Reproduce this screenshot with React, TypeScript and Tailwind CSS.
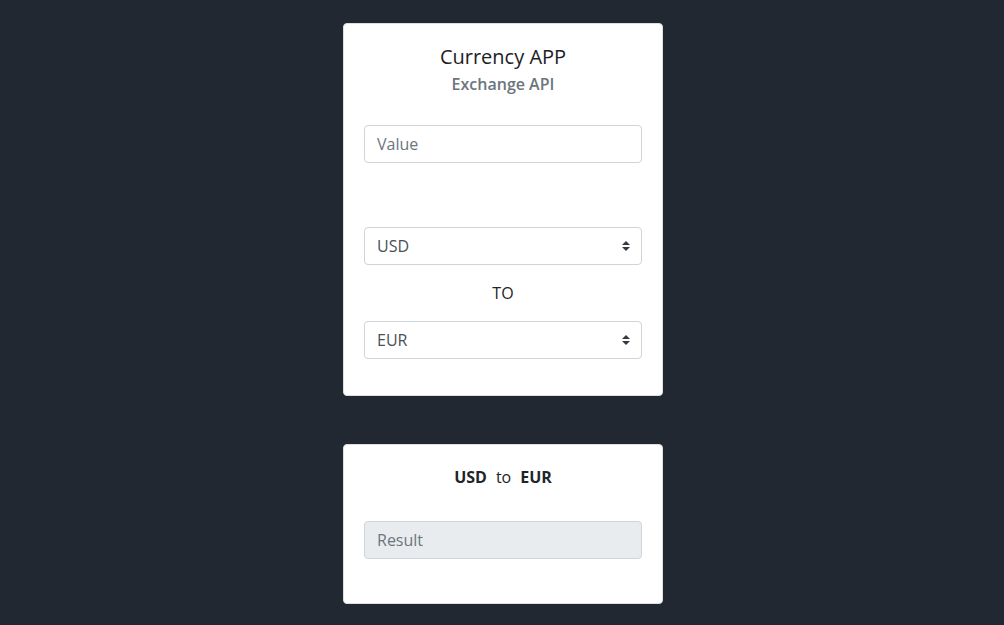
const Arrows = () => (
  <svg
    viewBox="0 0 4 5"
    className="pointer-events-none absolute right-[12px] top-1/2 h-[10px] w-[8px] -translate-y-1/2"
  >
    <path d="M2 0L0 2h4zm0 5L0 3h4z" fill="#343a40" />
  </svg>
);

const CurrencySelect = ({ value }: { value: string }) => (
  <div className="relative">
    <select
      defaultValue={value}
      className="h-[38px] w-full appearance-none rounded-[4px] border border-[#ced4da] bg-white pl-[12px] pr-[28px] text-[16px] text-[#495057] outline-none"
    >
      <option>USD</option>
      <option>EUR</option>
      <option>GBP</option>
      <option>BRL</option>
    </select>
    <Arrows />
  </div>
);

const App = () => {
  return (
    <div className="flex min-h-screen flex-col items-center bg-[#222831] pl-[2px] pt-[23px] font-['Open_Sans',sans-serif] text-[#212529]">
      {/* converter form */}
      <div className="w-[320px] rounded-[4px] border border-[#dfdfdf] bg-white px-[20px] pb-[36px] pt-[21px]">
        <h5 className="text-center text-[20px] leading-[24px] font-medium text-[#1d2125]">Currency APP</h5>
        <h6 className="mt-[6px] text-center text-[16px] leading-[19px] font-semibold text-[#6c757d]">
          Exchange API
        </h6>

        <input
          type="text"
          placeholder="Value"
          className="mt-[31px] h-[38px] w-full rounded-[4px] border border-[#ced4da] px-[12px] text-[16px] text-[#495057] outline-none placeholder:text-[#6c757d]"
        />

        <div className="mt-[64px]">
          <CurrencySelect value="USD" />
        </div>
        <p className="my-[16px] text-center text-[16px] leading-[24px]">TO</p>
        <CurrencySelect value="EUR" />
      </div>

      {/* result */}
      <div className="mt-[48px] w-[320px] rounded-[4px] border border-[#dfdfdf] bg-white px-[20px] pb-[44px] pt-[20px]">
        <p className="text-center text-[16px] leading-[24px]">
          <span className="font-bold">USD</span>
          <span className="mx-[9px]">to</span>
          <span className="font-bold">EUR</span>
        </p>
        <input
          type="text"
          placeholder="Result"
          readOnly
          className="mt-[32px] h-[38px] w-full rounded-[4px] border border-[#ced4da] bg-[#e9ecef] px-[12px] text-[16px] text-[#495057] outline-none placeholder:text-[#6c757d]"
        />
      </div>
    </div>
  );
};

export default App;
